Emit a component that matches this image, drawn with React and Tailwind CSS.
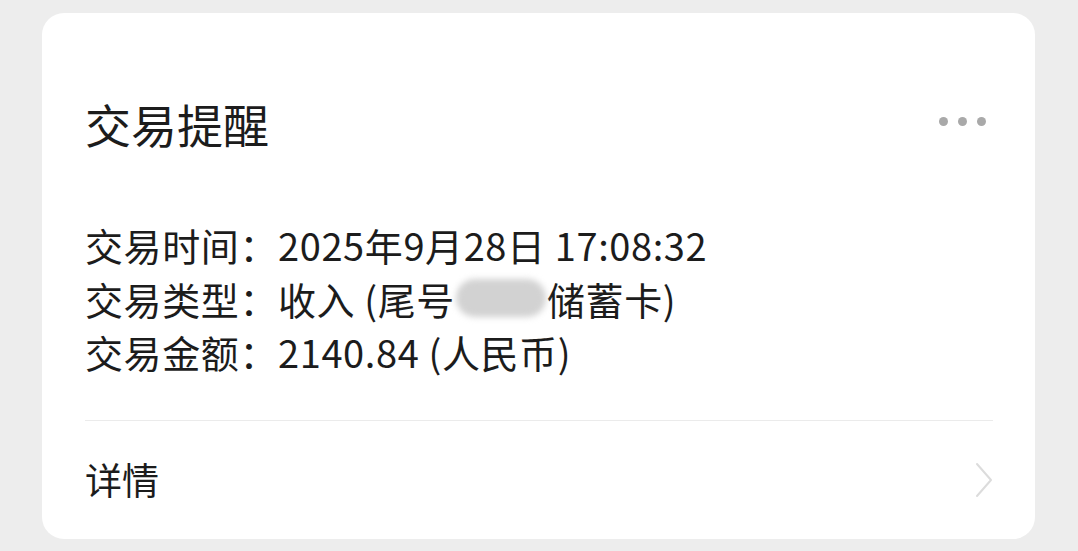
import React from 'react';

const font = { fontFamily: '"Noto Sans CJK SC", "Noto Sans", sans-serif' };

function Row({ label, children }) {
  return (
    <div className="flex items-center h-[53.5px] whitespace-nowrap">
      <span>{label}</span>
      <span>{children}</span>
    </div>
  );
}

export default function App() {
  return (
    <div className="w-[1078px] h-[551px] bg-[#ededed] pt-[13px] pl-[42px] pr-[43px]" style={font}>
      <div className="bg-white rounded-[22px] h-[526px] pl-[43px] pr-[41px] flex flex-col text-[#1c1c1c]">
        {/* Header */}
        <div className="flex items-center justify-between pt-[78px] h-[142px]">
          <h1 className="text-[46px] leading-[64px] font-normal">交易提醒</h1>
          <div className="flex items-center gap-[10px] mr-[8px] mb-[4px]">
            <span className="w-[9px] h-[9px] rounded-full bg-[#a9a9a9]" />
            <span className="w-[9px] h-[9px] rounded-full bg-[#a9a9a9]" />
            <span className="w-[9px] h-[9px] rounded-full bg-[#a9a9a9]" />
          </div>
        </div>

        {/* Body */}
        <div className="mt-[63px] text-[38px] tracking-[0.6px]">
          <Row label="交易时间：">2025年9月28日 17:08:32</Row>
          <Row label="交易类型：">
            <span className="inline-flex items-center">
              收入 (尾号
              <span className="inline-block w-[90px] h-[38px] rounded-full bg-[#d2d2d2] blur-[3px] mx-[1px]" />
              储蓄卡)
            </span>
          </Row>
          <Row label="交易金额：">2140.84 (人民币)</Row>
        </div>

        <div className="mt-[41px] mr-[1px] h-px bg-[#ebebeb]" />

        {/* Footer */}
        <div className="flex-1 flex items-center justify-between">
          <span className="text-[37px]">详情</span>
          <svg width="20" height="38" viewBox="0 0 20 38" fill="none">
            <polyline points="3,3 17,19 3,35" stroke="#dcdcdc" strokeWidth="2" strokeLinecap="round" strokeLinejoin="round" />
          </svg>
        </div>
      </div>
    </div>
  );
}
